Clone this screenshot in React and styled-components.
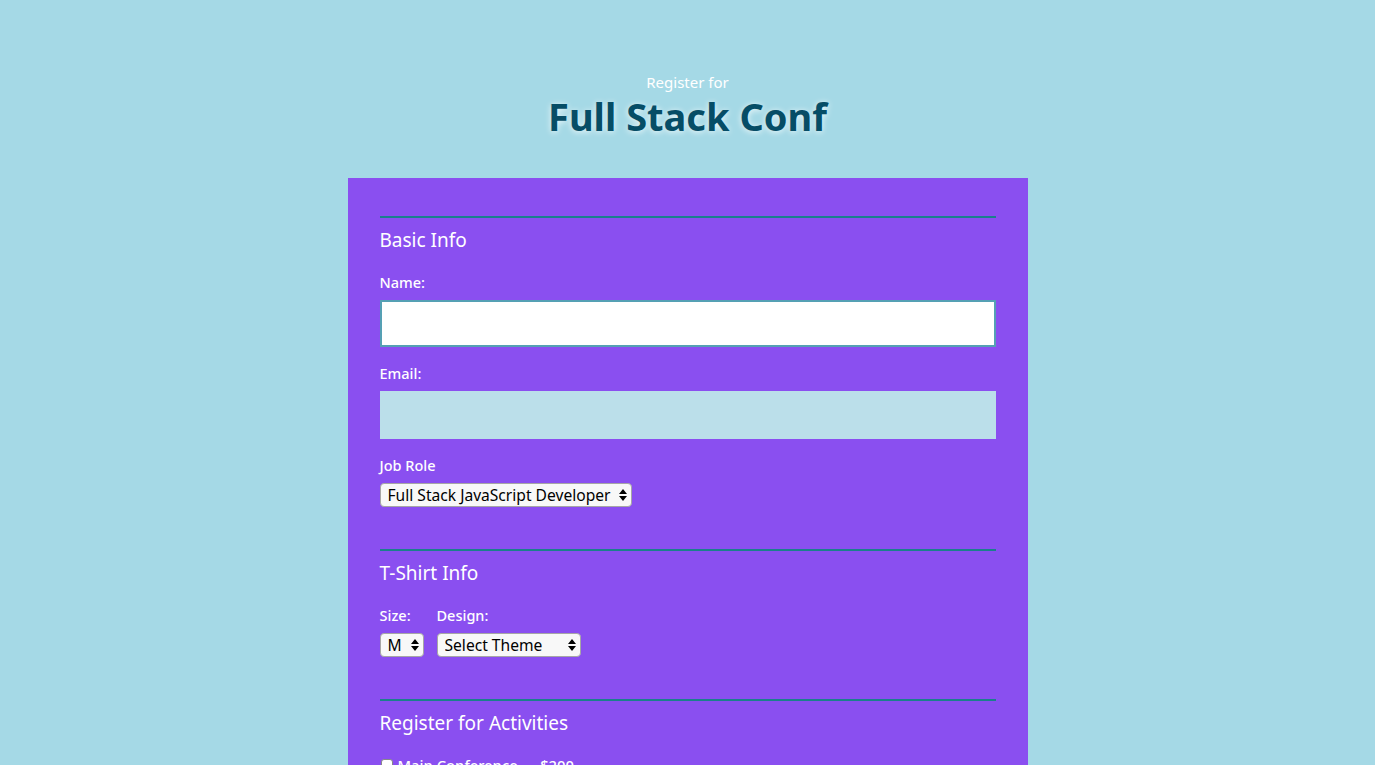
import React from 'react';
import styled, { createGlobalStyle } from 'styled-components';

const GlobalStyle = createGlobalStyle`
    html, body {
        margin: 0;
        padding: 0;
        background: #a5d9e6;
        font-family: "Noto Sans", "DejaVu Sans", sans-serif;
        overflow: hidden;
    }
`

const Page = styled.div`
    min-height: 765px;
    background: #a5d9e6;
`

const Header = styled.header`
    text-align: center;
    padding-top: 73px;
    padding-bottom: 39px;
`

const Kicker = styled.div`
    color: #fff;
    font-size: 15px;
    line-height: 18px;
`

const Title = styled.h1`
    margin: 2px 0 0;
    color: #064d66;
    font-size: 38px;
    font-weight: bold;
    line-height: 46px;
    text-shadow: 0 1px 6px rgba(255, 255, 255, 0.85);
`

const Form = styled.form`
    width: 680px;
    margin: 0 auto;
    box-sizing: border-box;
    padding: 38px 32px 40px;
    background: #8a4ff0;
    color: #fff;
    min-height: 600px;
`

const Section = styled.section`
    border-top: 2px solid #1a7f8c;
    padding-top: 10px;
    margin-bottom: 42px;
`

const Heading = styled.h2`
    margin: 0 0 21px;
    font-size: 19px;
    font-weight: normal;
    line-height: 24px;
`

const Label = styled.label`
    display: block;
    font-size: 14.5px;
    font-weight: 500;
    line-height: 18px;
    margin-bottom: 9px;
`

const TextInput = styled.input`
    display: block;
    width: 100%;
    box-sizing: border-box;
    height: ${p => p.$tall ? 47 : 48}px;
    margin: 0 0 17px;
    padding: 0 12px;
    border: 2px solid ${p => p.$active ? '#55a0b4' : '#bbdfea'};
    background: ${p => p.$active ? '#fff' : '#bbdfea'};
    font-size: 16px;
    font-family: inherit;
    outline: none;
    caret-color: #000;
`

const Row = styled.div`
    display: flex;
    gap: 13px;
`

const Field = styled.div`
    display: flex;
    flex-direction: column;
`

const SelectWrap = styled.div`
    position: relative;
    width: ${p => p.$width}px;
`

const Select = styled.select`
    appearance: none;
    -webkit-appearance: none;
    width: 100%;
    height: 24px;
    box-sizing: border-box;
    padding: 0 18px 0 7px;
    border: 1px solid #a6a6a6;
    border-radius: 4px;
    background: #f8f8f8;
    color: #000;
    font-family: inherit;
    font-size: 15.6px;
    line-height: 22px;
    outline: none;
`

const Arrows = styled.svg`
    position: absolute;
    right: 5px;
    top: 6px;
    pointer-events: none;
`

const Check = styled.label`
    display: flex;
    align-items: center;
    gap: 5px;
    font-size: 14.8px;
    font-weight: 500;
    line-height: 18px;
`

const Box = styled.span`
    width: 12px;
    height: 12px;
    margin-left: 1px;
    box-sizing: border-box;
    border: 1px solid #888;
    border-radius: 3px;
    background: #fff;
`

function Dropdown({ width, children }) {
    return (
        <SelectWrap $width={width}>
            <Select>{children}</Select>
            <Arrows width="8" height="12" viewBox="0 0 8 12">
                <path d="M4 0 L8 5 H0 Z M0 7 H8 L4 12 Z" fill="#000" />
            </Arrows>
        </SelectWrap>
    )
}

export default function App() {
    return (
        <Page>
            <GlobalStyle />
            <Header>
                <Kicker>Register for</Kicker>
                <Title>Full Stack Conf</Title>
            </Header>

            <Form>
                {/* 基本信息 */}
                <Section>
                    <Heading>Basic Info</Heading>
                    <Label>Name:</Label>
                    <TextInput type="text" $active $tall autoFocus />
                    <Label>Email:</Label>
                    <TextInput type="email" />
                    <Label>Job Role</Label>
                    <Dropdown width={252}>
                        <option>Full Stack JavaScript Developer</option>
                    </Dropdown>
                </Section>

                {/* T恤 */}
                <Section>
                    <Heading>T-Shirt Info</Heading>
                    <Row>
                        <Field>
                            <Label>Size:</Label>
                            <Dropdown width={44}>
                                <option>M</option>
                            </Dropdown>
                        </Field>
                        <Field>
                            <Label>Design:</Label>
                            <Dropdown width={144}>
                                <option>Select Theme</option>
                            </Dropdown>
                        </Field>
                    </Row>
                </Section>

                {/* 活动 */}
                <Section>
                    <Heading>Register for Activities</Heading>
                    <Check><Box />Main Conference — $200</Check>
                </Section>
            </Form>
        </Page>
    )
}
